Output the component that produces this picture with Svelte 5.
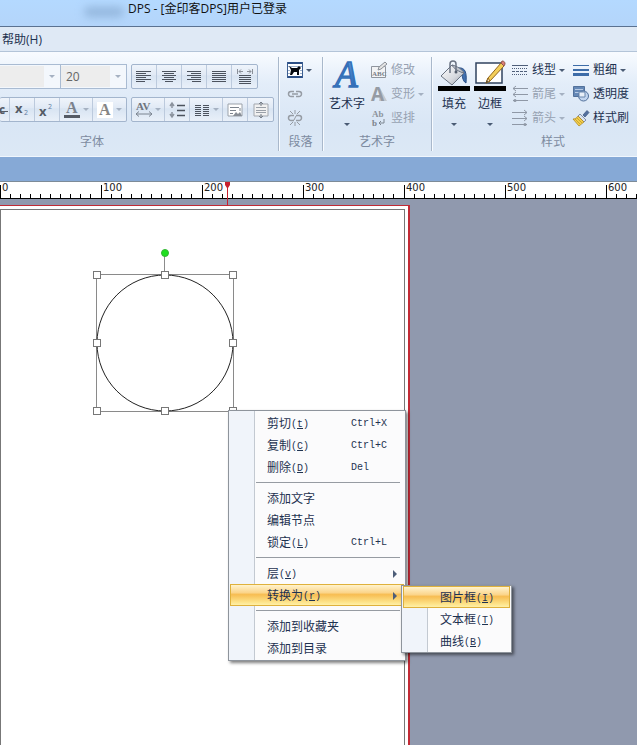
<script>
	const alignButtons = [
		{ name: 'left', label: '左对齐' },
		{ name: 'center', label: '居中' },
		{ name: 'right', label: '右对齐' },
		{ name: 'justify', label: '两端对齐' },
		{ name: 'spread', label: '分散对齐' }
	];

	const artTools = [
		{ name: 'edit', text: '修改' },
		{ name: 'morph', text: '变形', arrow: true },
		{ name: 'vertical', text: '竖排' }
	];

	const lineTools = [
		{ name: 'dashes', text: '线型', arrow: true, enabled: true },
		{ name: 'tail', text: '箭尾', arrow: true },
		{ name: 'head', text: '箭头', arrow: true }
	];

	const styleTools = [
		{ name: 'weight', text: '粗细', arrow: true, enabled: true },
		{ name: 'opacity', text: '透明度', enabled: true },
		{ name: 'brush', text: '样式刷', enabled: true }
	];

	const menu = [
		[
			{ text: '剪切', key: 't', shortcut: 'Ctrl+X' },
			{ text: '复制', key: 'C', shortcut: 'Ctrl+C' },
			{ text: '删除', key: 'D', shortcut: 'Del' }
		],
		[
			{ text: '添加文字' },
			{ text: '编辑节点' },
			{ text: '锁定', key: 'L', shortcut: 'Ctrl+L' }
		],
		[
			{ text: '层', key: 'v', sub: true },
			{ text: '转换为', key: 'r', sub: true, active: true }
		],
		[{ text: '添加到收藏夹' }, { text: '添加到目录' }]
	];

	const submenu = [
		{ text: '图片框', key: 'I', active: true },
		{ text: '文本框', key: 'T' },
		{ text: '曲线', key: 'B' }
	];

	let rulerWidth = $state(0);

	// 100 ruler units take 101 pixels
	let ticks = $derived(
		Array.from({ length: Math.ceil(rulerWidth / 10.1) }, (_, i) => ({
			x: Math.floor(i * 10.1),
			label: i % 10 === 0 ? i * 10 : null
		}))
	);

	const handles = [
		[4, 26], [72, 26], [140, 26],
		[4, 94], [140, 94],
		[4, 162], [72, 162], [140, 162]
	];
</script>

{#snippet icon(name)}
	<svg class="icon" width="16" height="16" viewBox="0 0 16 16" aria-hidden="true">
		{#if name === 'left'}
			<path d="M0 2.500h15M0 4.500h10M0 6.500h15M0 8.500h10M0 10.500h15M0 12.500h9" stroke="#4c535e" />
		{:else if name === 'center'}
			<path d="M1 2.500h14M3 4.500h10M1 6.500h14M3 8.500h10M1 10.500h14M4 12.500h8" stroke="#4c535e" />
		{:else if name === 'right'}
			<path d="M1 2.500h14M5 4.500h10M1 6.500h14M5 8.500h10M1 10.500h14M6 12.500h9" stroke="#4c535e" />
		{:else if name === 'justify'}
			<path d="M1 2.500h14M1 4.500h14M1 6.500h14M1 8.500h14M1 10.500h14M1 12.500h14" stroke="#4c535e" />
		{:else if name === 'spread'}
			<path d="M.5 0v5M15.500 0v5M2 2.500h4M10 2.500h4M4 .5l-2 2 2 2M12 .5l2 2-2 2" fill="none" stroke="#8a9099" />
			<path d="M2 6.500h12M2 8.500h12M2 10.500h12M2 12.500h12M2 14.500h12" stroke="#4c535e" />
		{:else if name === 'strike'}
			<text x="-2" y="12" font-size="12" font-weight="bold" fill="#555c66">c</text>
			<path d="M0 9.500h7" stroke="#555c66" />
		{:else if name === 'subscript'}
			<text x="1" y="11" font-size="13" font-weight="bold" fill="#555c66">x</text>
			<text x="10" y="13" font-size="7" fill="#5b7a9e">2</text>
		{:else if name === 'superscript'}
			<text x="0" y="14" font-size="13" font-weight="bold" fill="#555c66">x</text>
			<text x="9" y="7" font-size="7" fill="#5b7a9e">2</text>
		{:else if name === 'fontcolor'}
			<text class="serif" x="2" y="11" font-size="16" font-weight="bold" fill="#7b828d">A</text>
			<path d="M0 13h16v3H0z" fill="#555b65" />
		{:else if name === 'highlight'}
			<path d="M0 0h16v16H0z" fill="#fff" />
			<text class="serif" x="2" y="13" font-size="16" font-weight="bold" fill="#858585">A</text>
		{:else if name === 'spacing'}
			<text class="serif" x="0" y="8" font-size="11" font-weight="bold" fill="#6e747d">AV</text>
			<path d="M0 12h16M3 9.500L0 12l3 2.500M13 9.500l3 2.500-3 2.500" fill="none" stroke="#7b8490" />
		{:else if name === 'leading'}
			<path d="M3 1v5M1 4l2-3 2 3M3 15v-5M1 12l2 3 2-3" fill="none" stroke="#8b939e" stroke-width="1.500" />
			<path d="M8 3.500h8M8 8.500h8M8 13.500h8" stroke="#4c535e" stroke-width="1.500" />
		{:else if name === 'columns'}
			<path d="M1 3.500h6M9 3.500h6M1 5.500h6M9 5.500h6M1 7.500h6M9 7.500h6M1 9.500h6M9 9.500h6M1 11.500h6M9 11.500h6M1 13.500h6M9 13.500h6" stroke="#4c535e" />
		{:else if name === 'fit'}
			<path d="M1 2h14v12H1z" fill="#fff" stroke="#9ba2aa" />
			<path d="M3 5.500h9M3 8.500h6M3 11.500h3M13 6v3" stroke="#7d858f" />
			<path d="M6 14l3-4 2 2 2-2 2 4z" fill="#888e96" />
		{:else if name === 'grow'}
			<path d="M1 2h14v12H1z" fill="#f1f1f1" stroke="#a3a8af" />
			<path d="M3 5.500h10M3 8.500h10M3 10.500h10" stroke="#9aa0a8" />
			<path d="M8 0v4M6 2l2-2 2 2M8 12v4M6 14l2 2 2-2" fill="none" stroke="#777e88" />
		{:else if name === 'wrap'}
			<path d="M0 0h16v16H0z" fill="#fff" />
			<path d="M0 1h16M0 15h16" stroke="#2c4f86" stroke-width="2" />
			<path d="M.5 0v16M15.500 0v16" stroke="#3a5d91" />
			<path d="M1 4.500h14M1 11.500h2M13 11.500h2M1 8.500h2M13 8.500h2" stroke="#9db0cb" />
			<path d="M2 4l3 2h5l2-2 2 2-2 2v5h-2v-3H7l-2 3H3l1-5z" fill="#070a10" />
		{:else if name === 'link' || name === 'unlink'}
			<path d="M7 5.500H4a2.500 2.500 0 0 0 0 5h3M9 5.500h3a2.500 2.500 0 0 1 0 5H9" fill="none" stroke="#969ca4" stroke-width="1.500" />
			{#if name === 'link'}
				<path d="M5 8h6" stroke="#969ca4" stroke-width="1.500" />
			{:else}
				<path d="M8 0v4M3 1l3 3M13 1l-3 3M8 12v4M3 15l3-3M13 15l-3-3M9 6L7 10" stroke="#969ca4" />
			{/if}
		{:else if name === 'edit'}
			<path d="M.5 4.500h14v11H.5z" fill="#f2f3f5" stroke="#8f959e" />
			<text class="serif" x="1" y="14" font-size="7" font-weight="bold" fill="#777e88">ABC</text>
			<path d="M7 8l1-3 6-5 2 2-6 5z" fill="#e4e4e4" stroke="#8b9098" />
		{:else if name === 'morph'}
			<path d="M9 2l7 13H8z" fill="#c5c9cf" />
			<text x="0" y="15" font-size="19" font-weight="bold" fill="#959ba4">A</text>
		{:else if name === 'vertical'}
			<text class="serif" x="1" y="7" font-size="9" font-weight="bold" fill="#8c939c">Ab</text>
			<text class="serif" x="1" y="16" font-size="9" font-weight="bold" fill="#7d848d">b</text>
			<path d="M13 9v4H8M10 11l-2 2 2 2" fill="none" stroke="#7d8691" />
		{:else if name === 'dashes'}
			<path d="M0 3.500h16" stroke="#4f5f7a" />
			<path d="M0 6.500h16M0 12.500h16" stroke="#4f5f7a" stroke-dasharray="1 1" />
			<path d="M0 9.500h16" stroke="#4f5f7a" stroke-dasharray="3 1" />
		{:else if name === 'tail'}
			<path d="M1 2.500h15M1 8.500h15M1 14.500h15M4 0L1 2.500 4 5M4 6L1 8.500 4 11" fill="none" stroke="#8f98a6" />
			<circle cx="3" cy="14.500" r="1.500" fill="#8f98a6" />
		{:else if name === 'head'}
			<path d="M0 2.500h15M0 8.500h15M0 14.500h15M12 0l3 2.500L12 5M12 6l3 2.500-3 2.500" fill="none" stroke="#8f98a6" />
			<circle cx="13" cy="14.500" r="1.500" fill="#8f98a6" />
		{:else if name === 'weight'}
			<path d="M0 3.500h16" stroke="#3d6ca8" />
			<path d="M0 8h16" stroke="#3d6ca8" stroke-width="2" />
			<path d="M0 12.500h16" stroke="#3d6ca8" stroke-width="3" />
		{:else if name === 'opacity'}
			<path d="M.5 .5h11v10H.5z" fill="#6588b6" stroke="#52719b" />
			<path d="M2 3.500h8M2 6.500h4" stroke="#b7cae4" />
			<circle cx="10.500" cy="10" r="5" fill="#bad0ec" fill-opacity=".8" stroke="#52719b" />
			<path d="M6 6h6v5H6z" fill="#e8eff8" stroke="#6a88ae" />
		{:else if name === 'brush'}
			<path d="M10 5l4-4.500 2 2L12 7z" fill="#54709f" stroke="#38527e" stroke-width=".7" />
			<path d="M7 4l6 6-2 2-6-6z" fill="#dce3ef" stroke="#5b6d8b" stroke-width=".7" />
			<path d="M5 6l6 6c-2 1-3 3-5 4L0 9c2 0 4-1 5-3z" fill="#f3cf4a" stroke="#a8801d" stroke-width=".7" />
			<path d="M2 9l5 5M4 8l5 5" stroke="#b9922b" stroke-width=".7" />
		{/if}
	</svg>
{/snippet}

{#snippet tool(item)}
	<button class="tool" class:muted={!item.enabled}>
		{@render icon(item.name)}
		<span>{item.text}</span>
		{#if item.arrow}<i class="arrow"></i>{/if}
	</button>
{/snippet}

{#snippet menuItem(item)}
	<li>
		<button class="menu-item" class:active={item.active}>
			<span class="menu-text">{item.text}{#if item.key}<span class="mono accel">(<u>{item.key}</u>)</span>{/if}</span>
			{#if item.shortcut}<span class="mono">{item.shortcut}</span>{/if}
			{#if item.sub}<i class="sub-arrow"></i>{/if}
		</button>
	</li>
{/snippet}

<div class="app">
	<header class="titlebar">
		<span class="smudge"></span>
		<span>DPS - [金印客DPS]用户已登录</span>
	</header>

	<nav class="menubar">
		<button>帮助(H)</button>
	</nav>

	<div class="ribbon">
		<section class="group font-group">
			<div class="group-body font-body">
				<div class="row">
					<div class="combos">
						<label class="combo family">
							<select aria-label="字体"><option></option></select>
							<i class="arrow"></i>
						</label>
						<label class="combo size">
							<select aria-label="字号"><option>20</option></select>
							<i class="arrow"></i>
						</label>
					</div>
					<div class="cells">
						{#each alignButtons as b}
							<button class="cell" aria-label={b.label}>{@render icon(b.name)}</button>
						{/each}
					</div>
				</div>
				<div class="row">
					<div class="cells open">
						<button class="cell tiny" aria-label="删除线">{@render icon('strike')}</button>
						<button class="cell" aria-label="下标">{@render icon('subscript')}</button>
						<button class="cell" aria-label="上标">{@render icon('superscript')}</button>
						<button class="cell wide" aria-label="字体颜色">{@render icon('fontcolor')}<i class="arrow"></i></button>
						<button class="cell wide" aria-label="底色">{@render icon('highlight')}<i class="arrow"></i></button>
					</div>
					<div class="cells">
						<button class="cell wide" aria-label="字间距">{@render icon('spacing')}<i class="arrow"></i></button>
						<button class="cell" aria-label="行距">{@render icon('leading')}</button>
						<button class="cell wide" aria-label="分栏">{@render icon('columns')}<i class="arrow"></i></button>
						<button class="cell" aria-label="适应文字">{@render icon('fit')}</button>
						<button class="cell" aria-label="适应高度">{@render icon('grow')}</button>
					</div>
				</div>
			</div>
			<h2>字体</h2>
		</section>

		<section class="group para-group">
			<div class="group-body stack">
				<button class="tool" aria-label="环绕">{@render icon('wrap')}<i class="arrow"></i></button>
				<button class="tool" aria-label="链接">{@render icon('link')}</button>
				<button class="tool" aria-label="断开链接">{@render icon('unlink')}</button>
			</div>
			<h2>段落</h2>
		</section>

		<section class="group art-group">
			<div class="group-body">
				<button class="big">
					<svg width="32" height="34" viewBox="0 0 32 34" aria-hidden="true">
						<defs>
							<linearGradient id="artBlue" x1="0" y1="0" x2="1" y2="1">
								<stop offset="0" stop-color="#7db9f2" />
								<stop offset="1" stop-color="#1f5cab" />
							</linearGradient>
						</defs>
						<text class="serif" x="4" y="30" font-size="37" font-style="italic" fill="url(#artBlue)" stroke="#3570b8" stroke-width="1.500">A</text>
					</svg>
					<span>艺术字</span>
					<i class="arrow"></i>
				</button>
				<div class="stack">
					{#each artTools as item}
						{@render tool(item)}
					{/each}
				</div>
			</div>
			<h2>艺术字</h2>
		</section>

		<section class="group style-group">
			<div class="group-body">
				<button class="big">
					<svg width="32" height="34" viewBox="0 0 32 34" aria-hidden="true">
						<defs>
							<linearGradient id="bucket" x1="0" y1="0" x2="1" y2="1">
								<stop offset="0" stop-color="#fff" />
								<stop offset=".6" stop-color="#d6d9df" />
								<stop offset="1" stop-color="#8d95a2" />
							</linearGradient>
						</defs>
						<path d="M20 11c7-1 9 4 8 15-4-2-3-8-6-11z" fill="#406fae" stroke="#284f86" />
						<path d="M14 8L3 19l11 9 12-12z" fill="url(#bucket)" stroke="#6a7382" />
						<path d="M14 8c5 1 11 5 12 8-5-1-11-5-12-8z" fill="#c2c7cf" stroke="#6a7382" />
						<path d="M12 16V7c0-4 6-4 6 0v7" fill="none" stroke="#6a7382" stroke-width="1.500" />
						<circle cx="18" cy="15" r="1.500" fill="#535d6c" />
						<path d="M0 29h32v5H0z" fill="#000" />
					</svg>
					<span>填充</span>
					<i class="arrow"></i>
				</button>
				<button class="big">
					<svg width="32" height="34" viewBox="0 0 32 34" aria-hidden="true">
						<path d="M2 6h26v20H2z" fill="#fff" stroke="#31435f" stroke-width="1.500" />
						<path d="M12 26l2-5L27 6l3 3-14 15z" fill="#f4cf59" stroke="#92661e" />
						<path d="M27 6l1-2c2 0 3 1 3 3l-1 2z" fill="#db7d74" stroke="#92554a" />
						<path d="M12 26l2-5 2 3z" fill="#f6e2bd" stroke="#92661e" />
						<path d="M12 26l1-3 1 2z" fill="#3b3b3b" />
						<path d="M0 29h32v5H0z" fill="#000" />
					</svg>
					<span>边框</span>
					<i class="arrow"></i>
				</button>
				<div class="stack line-tools">
					{#each lineTools as item}
						{@render tool(item)}
					{/each}
				</div>
				<div class="stack">
					{#each styleTools as item}
						{@render tool(item)}
					{/each}
				</div>
			</div>
			<h2>样式</h2>
		</section>
	</div>

	<div class="tabstrip"></div>

	<div class="ruler" bind:clientWidth={rulerWidth}>
		<svg width="100%" height="16" aria-hidden="true">
			{#each ticks as t}
				<rect x={t.x} y={t.label === null ? 12 : 3} width="1" height={t.label === null ? 4 : 13} />
				{#if t.label !== null}
					<text x={t.x + 2} y="9">{t.label}</text>
				{/if}
			{/each}
		</svg>
		<svg class="marker" width="7" height="24" viewBox="0 0 7 24" aria-hidden="true">
			<path d="M1 0h5v3L4 6v18H3V6L1 3z" fill="#c8202e" />
		</svg>
	</div>

	<main class="workspace">
		<div class="sheet">
			<div class="margin-box"></div>
		</div>

		<svg class="shape" width="145" height="167" viewBox="0 0 145 167" aria-hidden="true">
			<path d="M71.500 3v20" stroke="#8c8c8c" />
			<circle cx="72" cy="4" r="3.500" fill="#1fe01f" stroke="#35b535" />
			<rect x="3.500" y="25.500" width="137" height="137" fill="none" stroke="#8a8a8a" />
			<circle cx="72" cy="94" r="68" fill="none" stroke="#222" />
			{#each handles as [x, y]}
				<rect x={x - 3.5} y={y - 3.5} width="7" height="7" fill="#fff" stroke="#777" />
			{/each}
		</svg>

		<ul class="menu context-menu">
			{#each menu as section, i}
				{#if i > 0}<li class="separator"></li>{/if}
				{#each section as item}
					{@render menuItem(item)}
				{/each}
			{/each}
		</ul>

		<ul class="menu submenu">
			{#each submenu as item}
				{@render menuItem(item)}
			{/each}
		</ul>
	</main>
</div>

<style>
	:global(body) {
		margin: 0;
	}

	.app {
		display: flex;
		flex-direction: column;
		min-height: 100vh;
		overflow: hidden;
		font: 12px/16px "Open Sans", "Noto Sans CJK SC", sans-serif;
		color: #1e3250;
	}

	button {
		padding: 0;
		border: 0;
		background: none;
		font: inherit;
		color: inherit;
		white-space: nowrap;
	}

	.titlebar {
		display: flex;
		height: 25px;
		padding: 1px 0 0 84px;
		background: linear-gradient(#b4d9ff, #b4d5fa);
		border-bottom: 1px solid #5b7291;
		color: #111;
		white-space: nowrap;
	}

	.smudge {
		width: 40px;
		height: 10px;
		margin: 6px 4px 0 0;
		border-radius: 5px;
		background: #93b6dc;
		filter: blur(4px);
	}

	.menubar {
		display: flex;
		align-items: center;
		height: 23px;
		padding: 1px 0 0 2px;
		background: #dfe9f5;
		border-bottom: 1px solid #b3c4d8;
	}

	.ribbon {
		display: flex;
		padding: 5px 0;
		background: linear-gradient(#f8fbff, #e3edf9 30%, #d9e6f5 70%, #dce8f5);
		border-bottom: 1px solid #f0f6fd;
	}

	.group {
		display: flex;
		flex-direction: column;
		flex-shrink: 0;
		box-sizing: border-box;
		border-right: 1px solid #a9b8cb;
		box-shadow: 1px 0 #f7fbff;
	}

	.group h2 {
		margin: 0;
		font-size: 12px;
		font-weight: normal;
		line-height: 18px;
		text-align: center;
		color: #7d8ba0;
	}

	.group-body {
		display: flex;
		height: 76px;
	}

	.font-group {
		width: 279px;
	}

	.font-group h2 {
		padding-right: 94px;
	}

	.para-group {
		width: 44px;
	}

	.para-group .stack {
		padding-left: 8px;
	}

	.art-group {
		width: 109px;
	}

	.style-group {
		flex: 1;
		border-right: 0;
		box-shadow: none;
	}

	.style-group h2 {
		padding-left: 37px;
	}

	.font-body {
		flex-direction: column;
		gap: 8px;
		padding-top: 7px;
		box-sizing: border-box;
	}

	.row {
		display: flex;
		gap: 4px;
	}

	.combos {
		display: flex;
		width: 127px;
	}

	.combo {
		position: relative;
		display: flex;
		box-sizing: border-box;
		height: 25px;
		border: 1px solid #a9bbd2;
		background: #f3f7fc;
	}

	.combo.family {
		width: 60px;
		border-left: 0;
		border-right: 0;
	}

	.combo.size {
		width: 67px;
	}

	.combo select {
		appearance: none;
		flex: 1;
		min-width: 0;
		margin: 1px 16px 1px 0;
		padding: 0 0 0 5px;
		border: 0;
		background: #ededed;
		font: 12px/21px "Open Sans", sans-serif;
		color: #666;
	}

	.combo .arrow {
		position: absolute;
		right: 5px;
		top: 10px;
	}

	.arrow {
		flex-shrink: 0;
		border: 3px solid transparent;
		border-top-color: #4a5b74;
		border-bottom: 0;
	}

	.combo .arrow,
	.cell .arrow,
	.muted .arrow {
		border-top-color: #a5b1c2;
	}

	.cells {
		display: flex;
		box-sizing: border-box;
		height: 25px;
		border: 1px solid #a3b5cd;
		border-radius: 2px;
		background: linear-gradient(#eff4fb, #e0e9f5 45%, #d8e4f2 46%, #e9f0f9);
	}

	.cells.open {
		width: 127px;
		border-left: 0;
	}

	.cell {
		display: flex;
		align-items: center;
		justify-content: center;
		gap: 3px;
		width: 25px;
		border-right: 1px solid #bccadd;
		box-sizing: border-box;
	}

	.cell:last-child {
		border-right: 0;
	}

	.cell.wide {
		width: 33px;
	}

	.cell.tiny {
		width: 10px;
	}

	.cell.tiny .icon {
		margin-left: 8px;
	}

	.icon {
		flex-shrink: 0;
		overflow: visible;
	}

	svg text {
		font-family: "Open Sans", sans-serif;
	}

	svg text.serif {
		font-family: "Liberation Serif", serif;
	}

	.stack {
		display: flex;
		flex-direction: column;
		padding-top: 1px;
		box-sizing: border-box;
	}

	.tool {
		display: flex;
		align-items: center;
		gap: 4px;
		height: 24px;
		padding-right: 8px;
	}

	.tool .arrow {
		margin-left: -1px;
	}

	.muted {
		color: #97a2b2;
	}

	.line-tools {
		padding-left: 4px;
	}

	.big {
		display: flex;
		flex-direction: column;
		align-items: center;
		width: 36px;
		flex-shrink: 0;
	}

	.big svg {
		overflow: visible;
	}

	.art-group .big {
		width: 48px;
	}

	.style-group .big:first-child {
		margin-left: 4px;
	}

	.big span {
		margin: 5px 0 11px;
	}

	.tabstrip {
		height: 24px;
		background: #86a9d6;
		border-bottom: 1px solid #7d8b98;
	}

	.ruler {
		position: relative;
		height: 16px;
		background: #fff;
		border-bottom: 1px solid #000;
	}

	.ruler svg {
		display: block;
	}

	.ruler text {
		font: 10px "DejaVu Sans", sans-serif;
		fill: #222;
	}

	.ruler .marker {
		position: absolute;
		left: 224px;
		top: 0;
		z-index: 1;
	}

	.workspace {
		position: relative;
		display: flex;
		flex: 1;
		min-height: 500px;
		padding-top: 6px;
		box-sizing: border-box;
		background: #9099ae;
	}

	.sheet {
		display: flex;
		width: 410px;
		padding: 3px 3px 0 0;
		box-sizing: border-box;
		background: #fff;
		border: solid #c22a35;
		border-width: 1px 2px 0 0;
	}

	.margin-box {
		flex: 1;
		border: 1px solid #777;
		border-bottom: 0;
	}

	.shape {
		position: absolute;
		left: 93px;
		top: 50px;
	}

	.menu {
		position: absolute;
		margin: 0;
		padding: 1px;
		box-sizing: border-box;
		list-style: none;
		border: 1px solid #8e949c;
		background: linear-gradient(90deg, #f0f4fa 25px, #c3c9d1 25px, #c3c9d1 26px, #fbfbfc 26px);
		box-shadow: 2px 2px 3px rgba(0, 0, 0, 0.5);
	}

	.context-menu {
		left: 228px;
		top: 211px;
		width: 178px;
	}

	.submenu {
		left: 401px;
		top: 386px;
		width: 111px;
		padding: 0 1px;
	}

	.menu-item {
		display: flex;
		align-items: center;
		width: 100%;
		height: 22px;
		padding: 2px 0 0 36px;
		border: 1px solid transparent;
		text-align: left;
	}

	.menu-item.active {
		border-color: #dfb13c;
		background: linear-gradient(#fff3cd, #fbd58b 38%, #f7bd52 48%, #fde38a 85%, #fff0a8);
	}

	.menu-text {
		width: 84px;
	}

	.mono {
		font: 10px/16px "Liberation Mono", monospace;
	}

	.accel {
		vertical-align: 1px;
		line-height: 1;
	}

	.menu u {
		text-underline-offset: 1px;
	}

	.sub-arrow {
		margin: 0 6px 0 auto;
		border: 4px solid transparent;
		border-left-color: #4d5d78;
		border-right: 0;
	}

	.separator {
		height: 1px;
		margin: 4px 4px 4px 26px;
		background: #969ba2;
	}
</style>
